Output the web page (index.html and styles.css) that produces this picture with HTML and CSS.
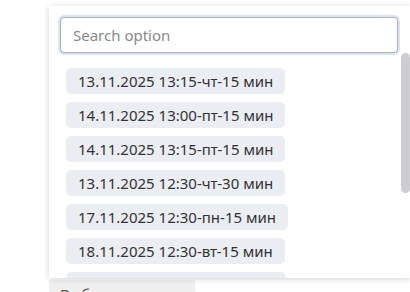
FILE: index.html
```html
<!DOCTYPE html>
<html>
  <head>
    <meta charset="utf-8" />
    <title>Select</title>
    <link rel="stylesheet" href="styles.css">
  </head>
  <body>
    <div class="page">
      <div class="field">Выберите время</div>

      <!-- dropdown popup -->
      <div class="popup">
        <div class="search">
          <input type="text" class="search-input" placeholder="Search option" />
        </div>
        <div class="list-wrap">
          <ul class="list">
            <li class="chip">13.11.2025 13:15-чт-15 мин</li>
            <li class="chip">14.11.2025 13:00-пт-15 мин</li>
            <li class="chip">14.11.2025 13:15-пт-15 мин</li>
            <li class="chip">13.11.2025 12:30-чт-30 мин</li>
            <li class="chip">17.11.2025 12:30-пн-15 мин</li>
            <li class="chip">18.11.2025 12:30-вт-15 мин</li>
            <li class="chip">19.11.2025 12:30-ср-15 мин</li>
          </ul>
          <div class="scroll-thumb"></div>
        </div>
      </div>
    </div>
  </body>
</html>
```

FILE: styles.css
```css
html,
body {
  margin: 0;
  padding: 0;
  background: #fff;
  font-family: "Segoe UI", "Noto Sans", sans-serif;
  color: #333;
}

.page {
  position: relative;
  width: 410px;
  height: 292px;
  overflow: hidden;
}

/* field behind the popup */

.field {
  position: absolute;
  left: 49px;
  top: 280px;
  width: 124px;
  height: 30px;
  padding: 4px 11px;
  background: #f0f0f0;
  font-size: 15px;
  color: #555;
  white-space: nowrap;
  overflow: hidden;
}

/* Popup */

.popup {
  position: absolute;
  left: 49px;
  top: 6px;
  width: 362px;
  height: 272px;
  background: #fff;
  box-shadow: 0 1px 6px rgba(0, 0, 0, 0.18);
  overflow: hidden;
}

.search {
  padding: 11px 13px 0 11px;
}

.search-input {
  box-sizing: border-box;
  width: 338px;
  height: 36px;
  padding: 0 12px;
  border: 1px solid #a9b1bd;
  border-radius: 4px;
  box-shadow: 0 0 0 2px #dbe5f2;
  font-family: inherit;
  font-size: 15px;
  color: #333;
  outline: none;
}

.search-input::placeholder {
  color: #888;
}

.list-wrap {
  position: relative;
  height: 230px;
}

.list {
  list-style: none;
  margin: 0;
  padding: 15px 0 0 17px;
  display: flex;
  flex-direction: column;
  align-items: flex-start;
  gap: 8px;
}

.chip {
  height: 26px;
  line-height: 26px;
  padding: 0 12px;
  border-radius: 5px;
  background: #eaedf2;
  font-size: 15px;
  color: #333;
  white-space: nowrap;
}

.scroll-thumb {
  position: absolute;
  right: 1px;
  top: 0;
  width: 9px;
  height: 140px;
  border-radius: 5px;
  background: #cdccd2;
}
```
